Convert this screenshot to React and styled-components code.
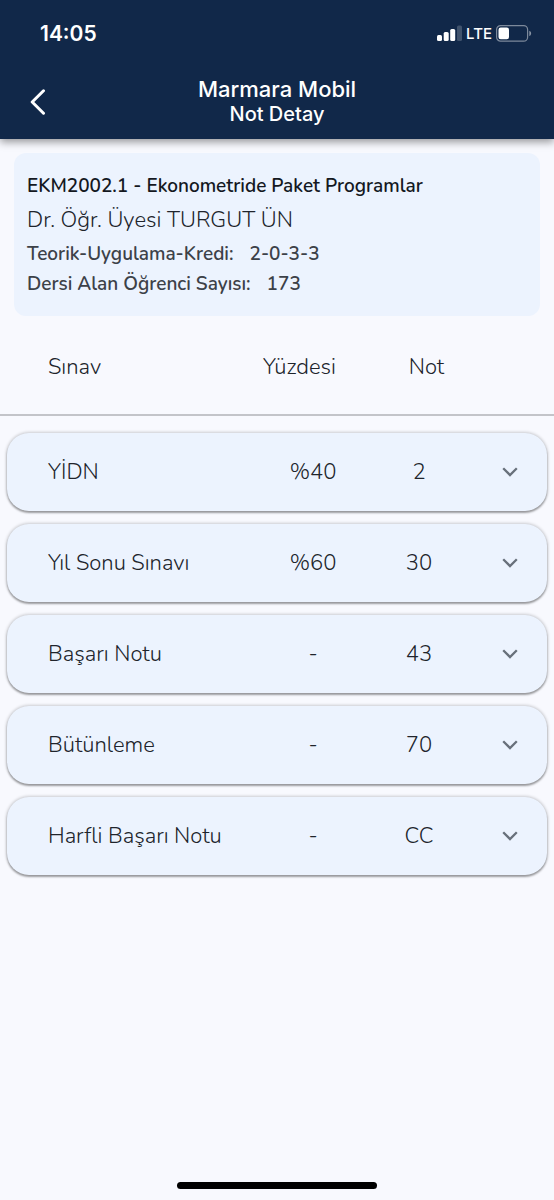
import { useState } from 'react';
import styled, { createGlobalStyle } from 'styled-components';

const GlobalStyle = createGlobalStyle`
  * {
    box-sizing: border-box;
  }

  body {
    margin: 0;
    background: #f8f9fe;
  }
`;

const course = {
  title: 'EKM2002.1 - Ekonometride Paket Programlar',
  teacher: 'Dr. Öğr. Üyesi TURGUT ÜN',
  credit: '2-0-3-3',
  students: '173',
};

const grades = [
  { exam: 'YİDN', percent: '%40', grade: '2' },
  { exam: 'Yıl Sonu Sınavı', percent: '%60', grade: '30' },
  { exam: 'Başarı Notu', percent: '-', grade: '43' },
  { exam: 'Bütünleme', percent: '-', grade: '70' },
  { exam: 'Harfli Başarı Notu', percent: '-', grade: 'CC' },
];

const StatusIcons = () => (
  <StatusGroup>
    <svg width="25" height="16" viewBox="0 0 25 16" fill="#fff" aria-hidden="true">
      <rect x="0" y="10" width="5" height="6" rx="1.5" />
      <rect x="6.7" y="7" width="5" height="9" rx="1.5" />
      <rect x="13.2" y="4" width="5" height="12" rx="1.5" />
      <rect x="20" y="0.5" width="5" height="15.5" rx="1.5" opacity="0.2" />
    </svg>
    <Network>LTE</Network>
    <svg width="36" height="17" viewBox="0 0 36 17" fill="none" aria-hidden="true">
      <rect x="0.6" y="0.6" width="31" height="15.6" rx="4" stroke="#fff" strokeOpacity="0.45" strokeWidth="1.2" />
      <rect x="2.5" y="2.5" width="10.5" height="11.8" rx="2.2" fill="#fff" />
      <path d="M33.3 5.8c1.1.4 1.8 1.4 1.8 2.6s-.7 2.2-1.8 2.6z" fill="#fff" fillOpacity="0.5" />
    </svg>
  </StatusGroup>
);

const App = () => {
  const [openExam, setOpenExam] = useState(null);

  const toggleExam = (exam) => {
    setOpenExam(openExam === exam ? null : exam);
  };

  return (
    <Page>
      <GlobalStyle />
      <Header>
        <StatusBar>
          <Clock>14:05</Clock>
          <StatusIcons />
        </StatusBar>
        <TitleBar>
          <BackButton aria-label="Geri">
            <svg width="16" height="26" viewBox="0 0 16 26" fill="none" aria-hidden="true">
              <path d="M13.5 1.8 2.2 13l11.3 11.2" stroke="#fff" strokeWidth="3" strokeLinecap="round" strokeLinejoin="round" />
            </svg>
          </BackButton>
          <Titles>
            <AppTitle>Marmara Mobil</AppTitle>
            <PageTitle>Not Detay</PageTitle>
          </Titles>
        </TitleBar>
      </Header>

      <CourseCard>
        <CourseTitle>{course.title}</CourseTitle>
        <Teacher>{course.teacher}</Teacher>
        <CourseInfo>
          <span>Teorik-Uygulama-Kredi:</span>
          <span>{course.credit}</span>
        </CourseInfo>
        <CourseInfo>
          <span>Dersi Alan Öğrenci Sayısı:</span>
          <span>{course.students}</span>
        </CourseInfo>
      </CourseCard>

      <GradeTable>
        <GradeHead>
          <HeadRow>
            <HeadCell $align="left">Sınav</HeadCell>
            <HeadCell>Yüzdesi</HeadCell>
            <HeadCell>Not</HeadCell>
          </HeadRow>
        </GradeHead>
        <GradeBody>
          {grades.map(({ exam, percent, grade }) => (
            <GradeRow key={exam}>
              <Cell $align="left">{exam}</Cell>
              <Cell>{percent}</Cell>
              <Cell>{grade}</Cell>
              <Cell>
                <ExpandButton
                  aria-label={exam}
                  aria-expanded={openExam === exam}
                  $isOpen={openExam === exam}
                  onClick={() => toggleExam(exam)}
                >
                  <svg width="16" height="10" viewBox="0 0 16 10" fill="none" aria-hidden="true">
                    <path d="M1.2 1.2 8 8l6.8-6.8" stroke="#68707b" strokeWidth="2.3" />
                  </svg>
                </ExpandButton>
              </Cell>
            </GradeRow>
          ))}
        </GradeBody>
      </GradeTable>

      <HomeIndicator />
    </Page>
  );
};

const Page = styled.div`
  min-height: 100vh;
  display: flex;
  flex-direction: column;
  font-family: Nunito, "Open Sans", sans-serif;
  color: #20242b;
`;

const Header = styled.header`
  background: #112849;
  color: #fff;
  font-family: Inter, sans-serif;
  box-shadow: 0 3px 8px rgba(0, 0, 0, 0.4);
`;

const StatusBar = styled.div`
  height: 66px;
  padding: 0 22px 0 40px;
  display: flex;
  align-items: center;
  justify-content: space-between;
`;

const Clock = styled.span`
  font-size: 21px;
  font-weight: 600;
`;

const StatusGroup = styled.div`
  display: flex;
  align-items: center;
  gap: 4px;
`;

const Network = styled.span`
  font-size: 15px;
  font-weight: 500;
`;

const TitleBar = styled.div`
  height: 73px;
  padding: 0 20px 2px;
  display: grid;
  grid-template-columns: 36px 1fr 36px;
  align-items: center;
`;

const BackButton = styled.button`
  height: 44px;
  padding: 0;
  border: none;
  background: none;
  display: flex;
  align-items: center;
  justify-content: center;
  cursor: pointer;
`;

const Titles = styled.div`
  text-align: center;
`;

const AppTitle = styled.h1`
  margin: 0;
  font-size: 22px;
  font-weight: 500;
  line-height: 25px;
`;

const PageTitle = styled.h2`
  margin: 0;
  font-size: 20px;
  font-weight: 500;
  line-height: 25px;
`;

const CourseCard = styled.section`
  margin: 14px 14px 0;
  padding: 18px 13px 17px;
  border-radius: 12px;
  background: #ecf3fe;
`;

const CourseTitle = styled.h3`
  margin: 0;
  color: #14181f;
  font-size: 19px;
  font-weight: 600;
  line-height: 30px;
`;

const Teacher = styled.p`
  margin: 0;
  font-size: 22px;
  font-weight: 300;
  line-height: 38px;
`;

const CourseInfo = styled.p`
  margin: 0;
  display: flex;
  gap: 16px;
  color: #3c4148;
  font-size: 19px;
  font-weight: 600;
  line-height: 30px;
`;

const GradeTable = styled.table`
  display: block;
  font-size: 22px;
  line-height: 28px;
`;

const GradeHead = styled.thead`
  display: block;
  border-bottom: 2px solid #c3c4c9;
`;

const HeadRow = styled.tr`
  height: 98px;
  padding: 4px 0 0 48px;
  display: grid;
  grid-template-columns: 1fr 127px 127px 64px;
  align-items: center;
`;

const HeadCell = styled.th`
  padding: 0;
  font-weight: 300;
  text-align: ${({ $align }) => $align || 'center'};
`;

const GradeBody = styled.tbody`
  padding: 17px 7px;
  display: flex;
  flex-direction: column;
  gap: 13px;
`;

const GradeRow = styled.tr`
  height: 78px;
  padding-left: 41px;
  display: grid;
  grid-template-columns: 1fr 106px 106px 75px;
  align-items: center;
  border-radius: 22px;
  background: #ecf3fe;
  box-shadow: 0 0 3px 1px rgba(0, 0, 0, 0.18), 0 2px 2px rgba(0, 0, 0, 0.3);
`;

const Cell = styled.td`
  padding: 0;
  font-weight: 300;
  text-align: ${({ $align }) => $align || 'center'};
`;

const ExpandButton = styled.button`
  width: 44px;
  height: 44px;
  padding: 0;
  border: none;
  background: none;
  display: inline-flex;
  align-items: center;
  justify-content: center;
  vertical-align: middle;
  cursor: pointer;

  svg {
    transform: ${({ $isOpen }) => $isOpen ? 'rotate(180deg)' : 'none'};
  }
`;

const HomeIndicator = styled.div`
  width: 36%;
  height: 7px;
  margin: auto auto 11px;
  border-radius: 4px;
  background: #000;
`;

export default App;
